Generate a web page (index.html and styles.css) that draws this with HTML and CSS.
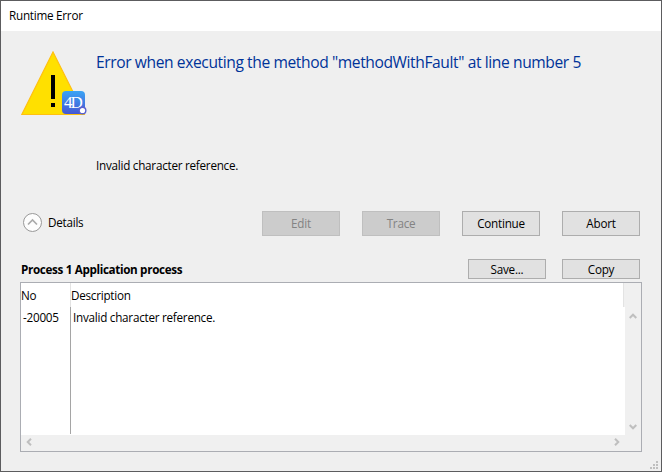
FILE: index.html
```html
<!DOCTYPE html>
<html lang="en">
<head>
<meta charset="utf-8">
<title>Runtime Error</title>
<link rel="stylesheet" href="styles.css">
</head>
<body>
<main class="window">
  <header class="titlebar">Runtime Error</header>
  <section class="message">
    <svg class="warning" width="68" height="66" viewBox="0 0 68 66">
      <defs><linearGradient id="badge" x1="0" y1="0" x2="0" y2="1"><stop offset="0" stop-color="#3ba4f5"/><stop offset="1" stop-color="#4557d3"/></linearGradient></defs>
      <path d="M32 1L63.300 63.500H.8z" fill="#ffe000" stroke="#ffc010" stroke-width="1.200"/>
      <path d="M30 24h4v24h-4zM30 52h4v4h-4z" fill="#000"/>
      <rect x="41" y="40" width="23" height="23" rx="4" fill="url(#badge)"/>
      <text x="43 49.500" y="56.500" class="logo">4D</text>
      <circle cx="61.500" cy="59.500" r="4" fill="#5a62cf"/>
      <circle cx="61.500" cy="59.500" r="2.600" fill="#fff"/>
    </svg>
    <div class="copy">
      <h1>Error when executing the method "methodWithFault" at line number 5</h1>
      <p>Invalid character reference.</p>
    </div>
  </section>
  <section class="actions">
    <div class="details">
      <svg width="20" height="20" viewBox="0 0 20 20" fill="none"><circle cx="10.500" cy="9.500" r="9" fill="#fdfdfd" stroke="#999"/><path d="M6 11.500L10.500 7l4.500 4.500" stroke="#aaa" stroke-width="1.700"/></svg>
      <span>Details</span>
    </div>
    <button disabled>Edit</button><button disabled>Trace</button><button>Continue</button><button>Abort</button>
  </section>
  <section class="process">
    <h2>Process 1 Application process</h2>
    <button>Save...</button><button>Copy</button>
  </section>
  <section class="list">
    <div class="head"><div class="no">No</div><div class="desc">Description</div></div>
    <div class="body">
      <div class="no">-20005</div>
      <div class="desc">Invalid character reference.</div>
      <div class="vscroll">
        <svg width="8" height="6" viewBox="0 0 8 6"><path d="M.7 5L4 1.700 7.300 5"/></svg>
        <svg width="8" height="6" viewBox="0 0 8 6"><path d="M.7 1L4 4.300 7.300 1"/></svg>
      </div>
    </div>
    <div class="hscroll">
      <svg width="6" height="8" viewBox="0 0 6 8"><path d="M5 .7L1.700 4 5 7.300"/></svg>
      <svg width="6" height="8" viewBox="0 0 6 8"><path d="M1 .7L4.300 4 1 7.300"/></svg>
    </div>
  </section>
  <svg class="grip" width="8" height="8" viewBox="0 0 8 8"><path d="M6 0h2v2H6zM3 3h2v2H3zM6 3h2v2H6zM0 6h2v2H0zM3 6h2v2H3zM6 6h2v2H6z" fill="#bfbfbf"/></svg>
</main>
</body>
</html>
```
FILE: styles.css
```css
* { box-sizing: border-box; }
body { margin: 0; font: 11.7px/16px "Open Sans", "Noto Sans", sans-serif; letter-spacing: -.25px; color: #000; }
h1, h2, p { margin: 0; }
svg { display: block; flex: none; }
.window { position: relative; width: 662px; height: 472px; border: 1px solid #5c5c5e; background: #efefef; overflow: hidden; }
.titlebar { height: 30px; padding: 6px 0 0 8px; background: #fff; }
.message { display: flex; height: 180px; padding: 20px 0 0 20px; }
.copy { padding-left: 7px; white-space: nowrap; }
h1 { height: 106px; font-size: 15.6px; font-weight: 400; line-height: 22px; letter-spacing: -.4px; color: #003399; }
.actions { display: flex; gap: 22px; height: 48px; padding: 0 21px; }
.details { display: flex; gap: 6px; width: 218px; padding-top: 2px; line-height: 18px; }
button { width: 78px; height: 25px; padding: 0 0 2px; border: 1px solid #adadad; background: #e1e1e1; font: inherit; letter-spacing: inherit; color: #000; }
button:disabled { border-color: #bfbfbf; background: #ccc; color: #838383; }
.process { display: flex; gap: 16px; height: 23px; padding: 0 21px 0 20px; }
.process button { height: 20px; padding-bottom: 1px; }
h2 { flex: 1; padding-top: 2px; font-size: 11.7px; line-height: 16px; letter-spacing: -.35px; }
.list { width: 622px; height: 170px; margin-left: 19px; border: 1px solid #abadb3; background: #f0f0f0; }
.head { display: flex; width: 603px; height: 24px; border-right: 1px solid #e3e3e3; background: #fff; line-height: 25px; }
.no { width: 50px; border-right: 1px solid #a5a5a5; }
.head .no { border-color: #e3e3e3; }
.body { display: flex; height: 128px; background: #fff; line-height: 20px; }
.body .no { padding-left: 2px; height: 127px; }
.body .desc { flex: 1; padding-left: 2px; }
.vscroll { display: flex; flex-direction: column; justify-content: space-between; width: 16px; padding: 6px 0 5px 4px; background: #f0f0f0; }
.vscroll path, .hscroll path { fill: none; stroke: #bfbfbf; stroke-width: 2; }
.hscroll { display: flex; justify-content: space-between; height: 16px; padding: 3px 21px 0 5px; }
.grip { position: absolute; right: 3px; bottom: 2px; }
.logo { font: 17px "Liberation Serif", serif; letter-spacing: 0; fill: #fff; }
```
